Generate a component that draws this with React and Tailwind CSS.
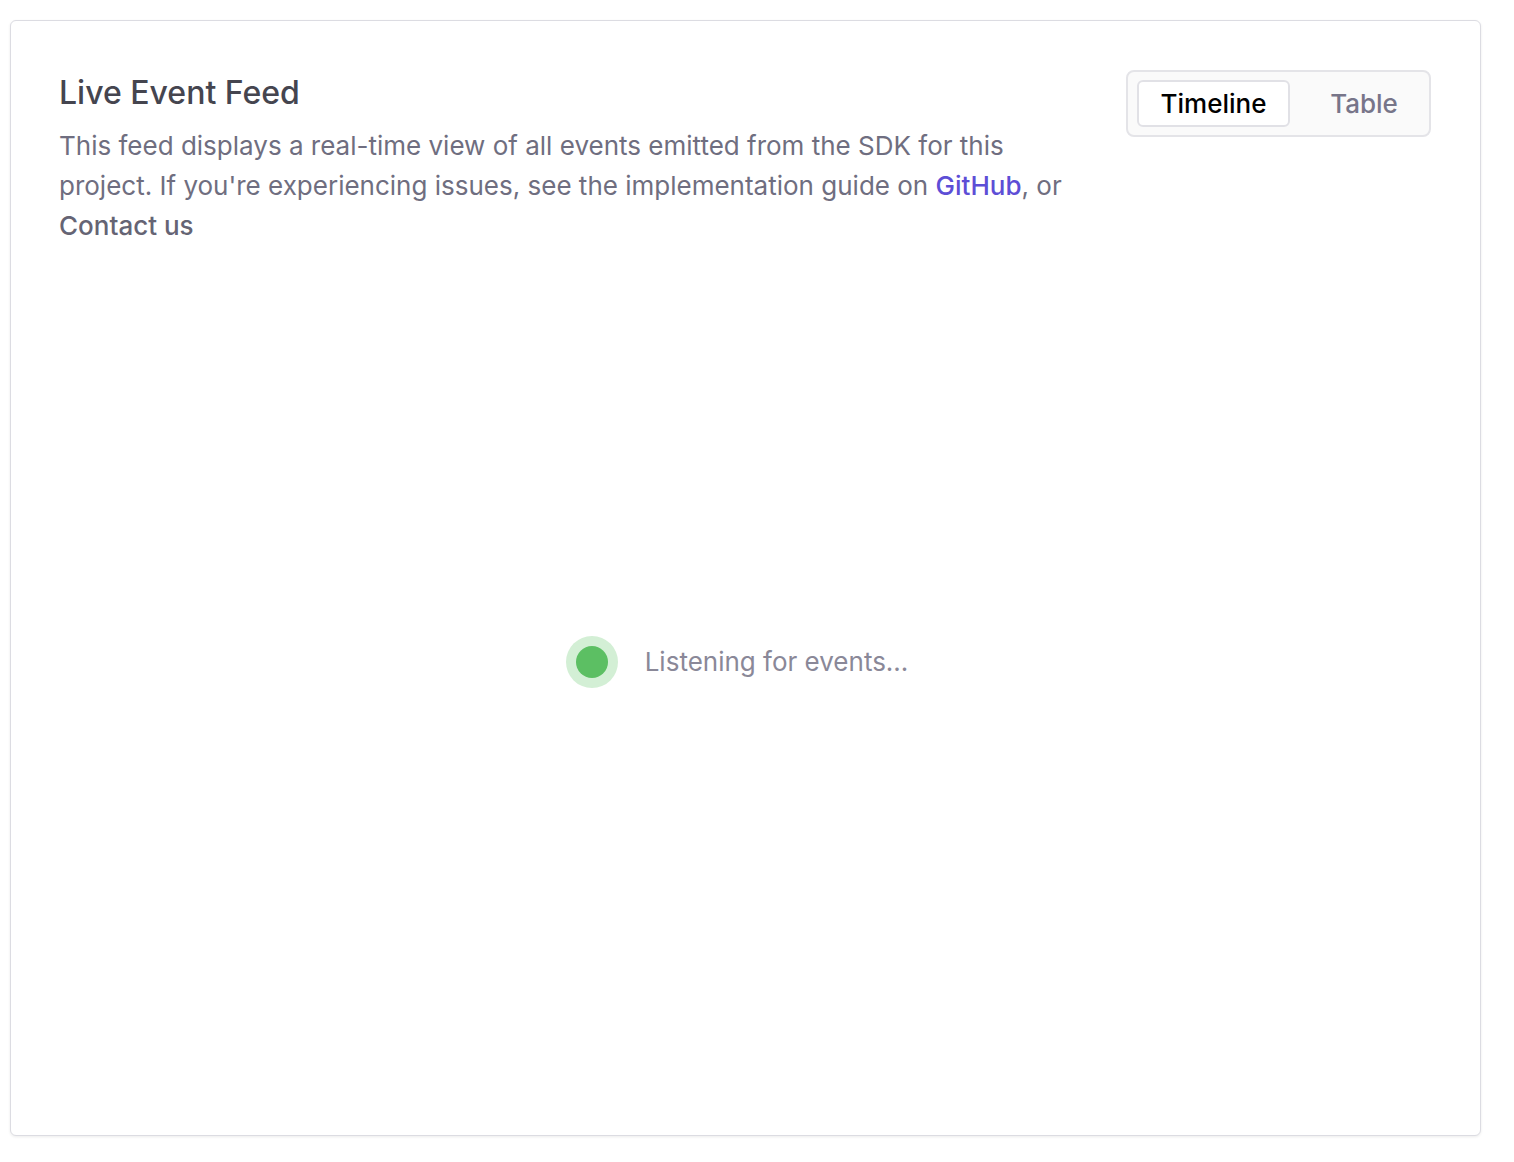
export default function App() {
  return (
    <div className="min-h-[1162px] w-[1514px] bg-white pl-[10px] pt-[20px] font-['Inter','Liberation_Sans',sans-serif]">
      <div className="flex h-[1116px] w-[1471px] flex-col rounded-md border border-[#dcdce2] bg-white pl-[48px] pr-[49px] pt-[49px] shadow-[0_1px_3px_rgba(0,0,0,0.08)]">
        {/* header */}
        <div className="flex items-start gap-14">
          <div className="flex-1">
            <h1 className="mt-[2px] text-[32px] font-medium leading-[42px] text-[#45454f]">Live Event Feed</h1>
            <p className="mt-[12px] text-[26px] leading-[40px] text-[#6f6e80]">
              This feed displays a real-time view of all events emitted from the SDK for this project. If you're experiencing issues, see the implementation guide on{' '}
              <a className="font-medium text-[#5d4ed6]">GitHub</a>, or{' '}
              <a className="font-medium text-[#656474]">Contact us</a>
            </p>
          </div>
          <div className="flex h-[67px] w-[305px] items-center rounded-lg border-2 border-[#e4e4e8] bg-[#fafafa] px-[9px]">
            <button className="h-[47px] w-[153px] rounded-md border-2 border-[#e1e1e6] bg-white text-[26px] font-medium text-black">
              Timeline
            </button>
            <button className="h-[47px] flex-1 pl-[18px] text-[26px] font-medium text-[#777589]">Table</button>
          </div>
        </div>

        {/* listening state */}
        <div className="flex flex-1 items-center justify-center pb-[58px] pr-[16px]">
          <div className="flex items-center gap-[27px]">
            <span className="flex h-[52px] w-[52px] items-center justify-center rounded-full bg-[#d3efd5]">
              <span className="h-[32px] w-[32px] rounded-full bg-[#5cbf63]" />
            </span>
            <span className="text-[26px] text-[#8a8898]">Listening for events...</span>
          </div>
        </div>
      </div>
    </div>
  );
}
